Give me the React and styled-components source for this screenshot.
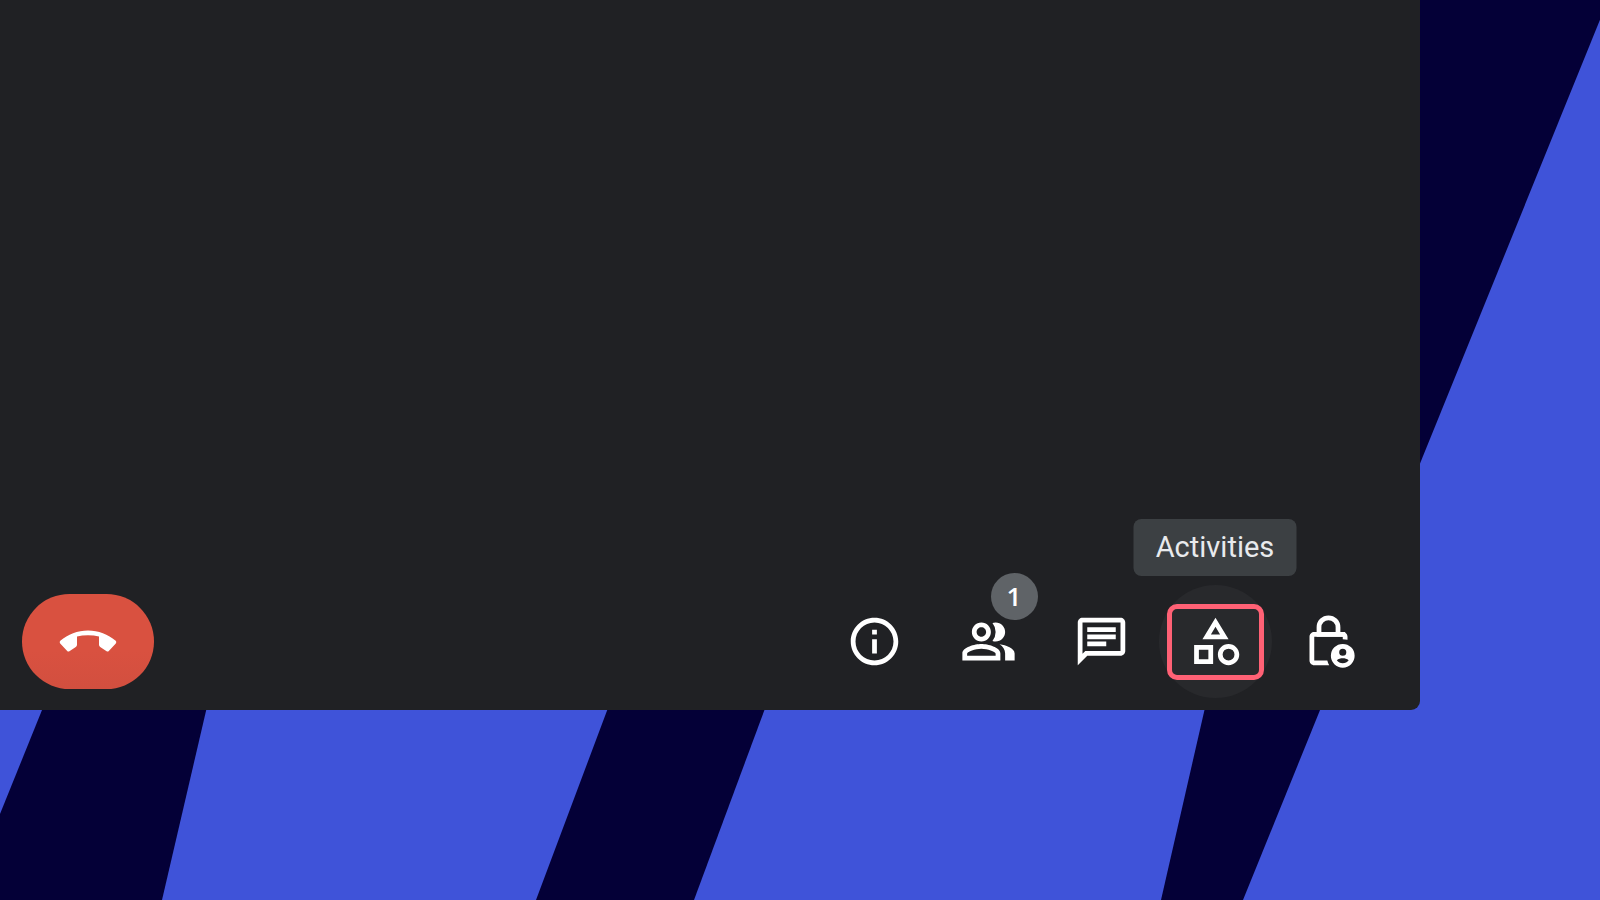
import React, { useState } from 'react';
import styled, { createGlobalStyle } from 'styled-components';
import {
  MdInfoOutline,
  MdOutlinePeopleAlt,
  MdOutlineChat,
  MdOutlineCategory,
} from 'react-icons/md';

const GlobalStyle = createGlobalStyle`
  * {
    box-sizing: border-box;
  }

  body {
    margin: 0;
    font-family: Roboto, "Liberation Sans", sans-serif;
  }
`;

//page and its striped backdrop
const Page = styled.main`
  position: relative;
  display: flex;
  min-height: 100vh;
  padding: 0 180px 190px 0;
  background-color: #3f53d9;
  overflow: hidden;
`;

const Stripes = styled.svg`
  position: absolute;
  inset: 0;
  width: 100%;
  height: 100%;
  fill: #040037;
`;

//meeting window
const MeetingWindow = styled.section`
  position: relative;
  display: flex;
  flex: 1;
  flex-direction: column;
  justify-content: flex-end;
  border-radius: 0 0 9px 0;
  background-color: #202124;
`;

const Toolbar = styled.div`
  display: flex;
  align-items: center;
  justify-content: space-between;
  padding: 0 35px 12px 22px;
`;

const ToolGroup = styled.div`
  display: flex;
  justify-content: space-between;
  width: 567px;
`;

const EndCallButton = styled.button`
  display: flex;
  align-items: center;
  justify-content: center;
  width: 132px;
  height: 95px;
  padding: 0;
  border: none;
  border-radius: 48px;
  background: linear-gradient(#d95140 60%, #d24f3f);
  color: #fff;
  cursor: pointer;
`;

const ToolButton = styled.button`
  position: relative;
  display: flex;
  align-items: center;
  justify-content: center;
  width: 113px;
  height: 113px;
  padding: 0;
  border: none;
  border-radius: 50%;
  background-color: ${(props) => (props.$active ? '#28292c' : 'transparent')};
  color: #fff;
  cursor: pointer;
`;

const Highlight = styled.span`
  display: flex;
  align-items: center;
  justify-content: center;
  width: 97px;
  height: 76px;
  border: 5px solid #ff6175;
  border-radius: 10px;
`;

const Badge = styled.span`
  position: absolute;
  top: -12px;
  right: 7px;
  width: 47px;
  height: 47px;
  border-radius: 50%;
  background-color: #5f6367;
  font-family: "Open Sans", "Noto Sans", sans-serif;
  font-size: 26px;
  font-weight: 600;
  line-height: 47px;
  text-align: center;
`;

const Tooltip = styled.span`
  position: absolute;
  bottom: calc(100% + 9px);
  left: 50%;
  min-width: 163px;
  border-radius: 8px;
  background-color: #3c4043;
  color: #e8eaed;
  font-family: Roboto, "Liberation Sans", sans-serif;
  font-size: 29px;
  line-height: 57px;
  text-align: center;
  transform: translateX(-50%);
`;

const Backdrop = () => (
  <Stripes viewBox="0 0 1600 900" preserveAspectRatio="none" aria-hidden="true">
    <polygon points="59,668 0,814 0,900 162,900 216,668" />
    <polygon points="623,668 536,900 694,900 780,668" />
    <polygon points="1367,0 1161,900 1243,900 1608,0" />
  </Stripes>
);

const HangUpIcon = () => (
  <svg width="58" height="24" viewBox="0 0 58 24" fill="currentColor" aria-hidden="true">
    <path d="M29 .5C18.5.5 9 4.300 1.300 10.800Q0 12 1.200 13.400L8.200 21Q9.200 22 10.400 21.200L16.800 17Q18 16.200 18 14.800V6.500Q23 5.200 29 5.200T40 6.500V14.800Q40 16.200 41.200 17L47.600 21.200Q48.800 22 49.800 21L56.800 13.400Q58 12 56.700 10.800C49 4.300 39.500.5 29 .5Z" />
  </svg>
);

//padlock with a small person on top of its lower right corner
const HostControlsIcon = ({ size }) => (
  <svg width={size} height={size} viewBox="0 0 24 24" aria-hidden="true">
    <path
      d="M19 9H8V6c0-2.210 1.790-4 4-4s4 1.790 4 4v3"
      fill="none"
      stroke="currentColor"
      strokeWidth="2"
    />
    <path
      d="M18 8H6c-1.100 0-2 .9-2 2v10c0 1.100.9 2 2 2h6.300c-.35-.6-.65-1.300-.8-2H6V10h12v1c.7 0 1.370.1 2 .3V10c0-1.100-.9-2-2-2z"
      fill="currentColor"
    />
    <path
      d="M18 13a5 5 0 1 0 0 10 5 5 0 0 0 0-10zm0 2a1.500 1.500 0 1 1 0 3 1.500 1.500 0 0 1 0-3zm0 6.200c-1 0-1.950-.5-2.500-1.300.7-.55 1.600-.8 2.500-.8s1.800.25 2.500.8c-.55.8-1.500 1.300-2.500 1.300z"
      fill="currentColor"
      fillRule="evenodd"
    />
  </svg>
);

const tools = [
  { name: 'Meeting details', icon: MdInfoOutline },
  { name: 'People', icon: MdOutlinePeopleAlt, count: 1 },
  { name: 'Chat', icon: MdOutlineChat },
  { name: 'Activities', icon: MdOutlineCategory },
  { name: 'Host controls', icon: HostControlsIcon },
];

const Tool = ({ tool, active, onSelect }) => {
  const Icon = tool.icon;
  return (
    <ToolButton type="button" aria-label={tool.name} $active={active} onClick={onSelect}>
      {active ? (
        <>
          <Highlight>
            <Icon size={57} />
          </Highlight>
          <Tooltip role="tooltip">{tool.name}</Tooltip>
        </>
      ) : (
        <Icon size={57} />
      )}
      {tool.count && <Badge>{tool.count}</Badge>}
    </ToolButton>
  );
};

function App() {
  const [selected, setSelected] = useState('Activities');

  return (
    <Page>
      <GlobalStyle />
      <Backdrop />
      <MeetingWindow>
        <Toolbar>
          <EndCallButton type="button" aria-label="Leave call">
            <HangUpIcon />
          </EndCallButton>
          <ToolGroup>
            {tools.map((tool) => (
              <Tool
                key={tool.name}
                tool={tool}
                active={tool.name === selected}
                onSelect={() => setSelected(tool.name)}
              />
            ))}
          </ToolGroup>
        </Toolbar>
      </MeetingWindow>
    </Page>
  );
}

export default App;
